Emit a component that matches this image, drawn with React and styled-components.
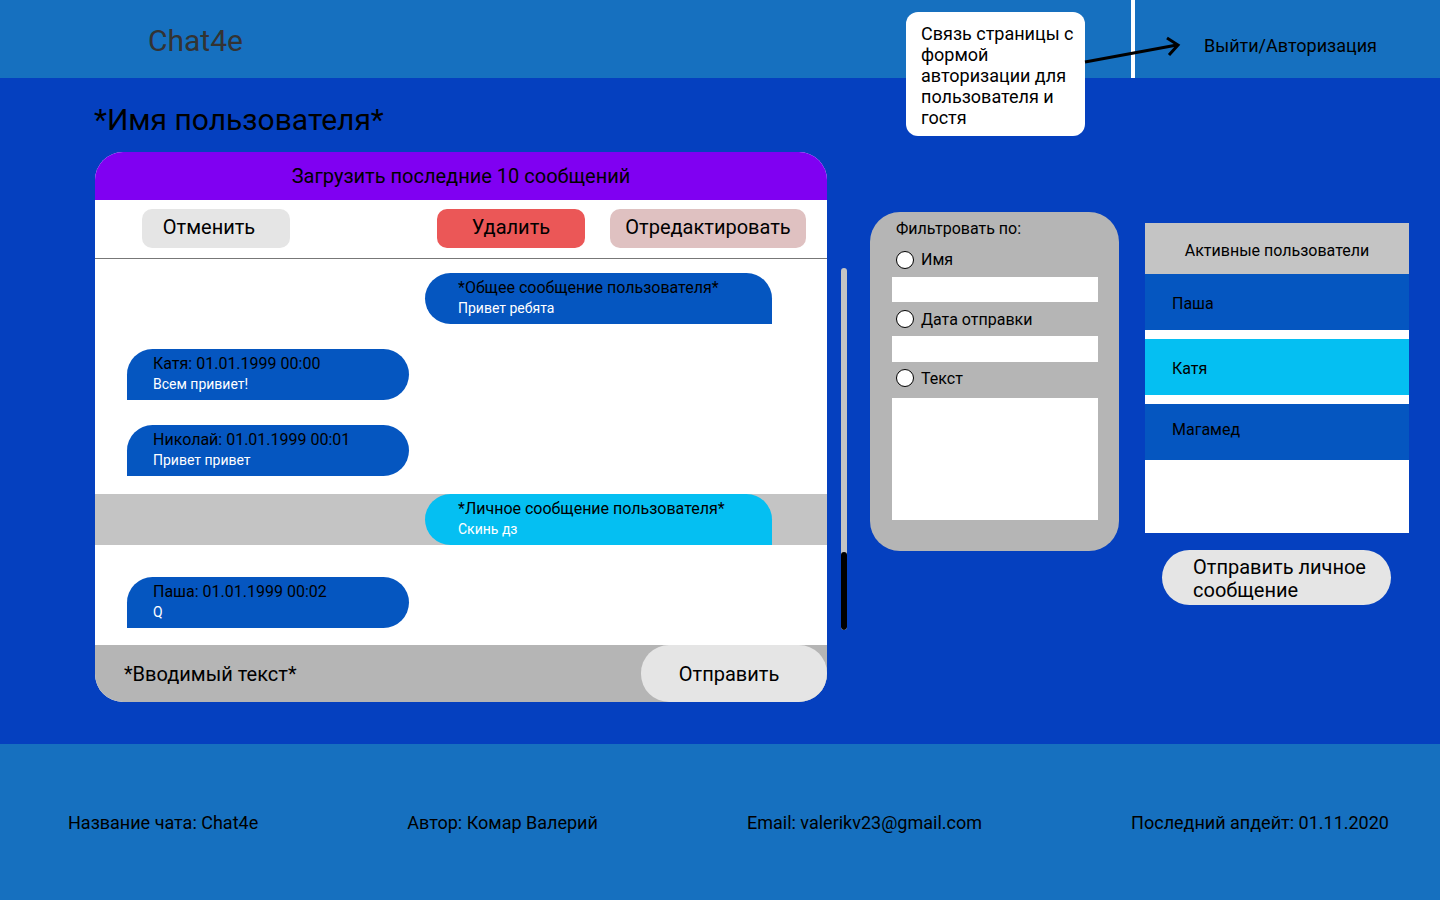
import React from "react";
import styled, { createGlobalStyle } from "styled-components";

const GlobalStyle = createGlobalStyle`
  html, body {
    margin: 0;
    padding: 0;
    width: 1440px;
    height: 900px;
    overflow: hidden;
    font-family: Roboto, "Noto Sans", sans-serif;
    color: #000;
  }
`;

const Page = styled.div`
  display: flex;
  flex-direction: column;
  width: 1440px;
  height: 900px;
  background: #0540bf;
`;

const Header = styled.header`
  position: relative;
  display: flex;
  align-items: center;
  height: 78px;
  background: #1670bf;
  z-index: 2;
`;

const Logo = styled.div`
  margin: 2px 0 0 148px;
  font-size: 30px;
  color: #333;
  flex: 1;
`;

const Divider = styled.div`
  align-self: stretch;
  width: 4px;
  background: #fff;
`;

const AuthLink = styled.a`
  width: 236px;
  padding-left: 69px;
  font-size: 18px;
  color: #000;
  margin-top: 12px;
`;

const Callout = styled.div`
  position: absolute;
  left: 906px;
  top: 12px;
  width: 179px;
  height: 124px;
  box-sizing: border-box;
  padding: 11px 6px 0 15px;
  background: #fff;
  border-radius: 12px;
  font-size: 18px;
  line-height: 21px;
`;

const CalloutArrow = styled.svg`
  position: absolute;
  left: 1083px;
  top: 36px;
`;

const Main = styled.main`
  display: flex;
  align-items: flex-start;
  height: 666px;
`;

const ChatColumn = styled.section`
  display: flex;
  flex-direction: column;
  margin-left: 95px;
`;

const UserName = styled.h1`
  margin: 25px 0 15px -1px;
  font-size: 30px;
  line-height: 34px;
  font-weight: 400;
`;

const ChatRow = styled.div`
  display: flex;
  gap: 14px;
`;

const ChatPanel = styled.div`
  display: flex;
  flex-direction: column;
  width: 732px;
  height: 550px;
  background: #fff;
  border-radius: 28px;
  overflow: hidden;
`;

const LoadBar = styled.div`
  display: flex;
  align-items: center;
  justify-content: center;
  height: 48px;
  flex-shrink: 0;
  background: #8000f2;
  font-size: 20px;
`;

const Toolbar = styled.div`
  display: flex;
  align-items: center;
  height: 58px;
  flex-shrink: 0;
  padding: 0 21px 0 47px;
  border-bottom: 1px solid #777;
`;

const ToolButton = styled.button`
  height: 39px;
  width: ${(p) => p.$w}px;
  margin: -1px 0 0 ${(p) => p.$ml || 0}px;
  padding: 0 ${(p) => p.$pr || 0}px 3px 0;
  border: none;
  border-radius: 10px;
  background: ${(p) => p.$bg};
  font-family: inherit;
  font-size: 20px;
  color: #000;
`;

const Messages = styled.div`
  display: flex;
  flex-direction: column;
  flex: 1;
  padding-top: 14px;
`;

const PrivateRow = styled.div`
  display: flex;
  background: #c4c4c4;
  margin: ${(p) => p.$m};
`;

const Bubble = styled.div`
  box-sizing: border-box;
  height: 51px;
  width: ${(p) => (p.$right ? 347 : 282)}px;
  margin: ${(p) => p.$m || 0};
  padding: ${(p) => (p.$right ? "5px 0 0 33px" : "5px 0 0 26px")};
  background: ${(p) => (p.$private ? "#05bff2" : "#0556c0")};
  border-radius: ${(p) => (p.$right ? "26px 26px 0 26px" : "26px 26px 26px 0")};
`;

const BubbleTitle = styled.div`
  font-size: 16px;
  line-height: 20px;
  color: #000;
`;

const BubbleText = styled.div`
  font-size: 14px;
  line-height: 20px;
  color: #fff;
`;

const InputBar = styled.div`
  display: flex;
  align-items: center;
  height: 57px;
  flex-shrink: 0;
  background: #b5b5b5;
`;

const InputText = styled.div`
  flex: 1;
  padding-left: 29px;
  font-size: 20px;
`;

const SendButton = styled.button`
  width: 186px;
  height: 57px;
  padding: 0 10px 0 0;
  border: none;
  border-radius: 28px;
  background: #e5e5e5;
  font-family: inherit;
  font-size: 20px;
  color: #000;
`;

const ScrollTrack = styled.div`
  display: flex;
  flex-direction: column;
  justify-content: flex-end;
  width: 6px;
  height: 362px;
  margin-top: 116px;
  border-radius: 3px;
  background: #c4c4c4;
  overflow: hidden;
`;

const ScrollThumb = styled.div`
  height: 78px;
  border-radius: 3px;
  background: #000;
`;

const FilterPanel = styled.aside`
  display: flex;
  flex-direction: column;
  box-sizing: border-box;
  width: 249px;
  height: 339px;
  margin: 134px 0 0 23px;
  padding: 7px 21px 0 22px;
  background: #b5b5b5;
  border-radius: 30px;
`;

const FilterLabel = styled.div`
  padding-left: 4px;
  font-size: 16px;
  line-height: 20px;
`;

const RadioRow = styled.label`
  display: flex;
  align-items: center;
  gap: 7px;
  box-sizing: border-box;
  height: ${(p) => p.$h}px;
  padding: ${(p) => p.$pad || "0"};
  padding-left: 4px;
  font-size: 16px;
`;

const Radio = styled.span`
  box-sizing: border-box;
  width: 18px;
  height: 18px;
  border-radius: 50%;
  border: 1px solid #000;
  background: #fff;
`;

const FilterInput = styled.div`
  height: ${(p) => p.$h}px;
  background: #fff;
`;

const UsersColumn = styled.aside`
  display: flex;
  flex-direction: column;
  margin: 145px 0 0 26px;
`;

const UsersList = styled.div`
  display: flex;
  flex-direction: column;
  gap: 9px;
  width: 264px;
  height: 310px;
  background: #fff;
`;

const UsersHeader = styled.div`
  display: flex;
  align-items: center;
  justify-content: center;
  height: 51px;
  margin-bottom: -9px;
  padding-top: 3px;
  box-sizing: border-box;
  background: #c4c4c4;
  font-size: 16px;
`;

const UserRow = styled.div`
  display: flex;
  align-items: center;
  box-sizing: border-box;
  height: 56px;
  padding: ${(p) => p.$pad || "2px 0 0 0"};
  padding-left: 27px;
  background: ${(p) => (p.$active ? "#05bff2" : "#0556c0")};
  font-size: 16px;
`;

const PrivateButton = styled.button`
  width: 229px;
  height: 55px;
  margin: 17px 0 0 17px;
  padding: 3px 0 0 31px;
  border: none;
  border-radius: 28px;
  background: #e5e5e5;
  font-family: inherit;
  font-size: 20px;
  line-height: 23px;
  text-align: left;
  color: #000;
`;

const Footer = styled.footer`
  display: flex;
  align-items: center;
  justify-content: space-between;
  height: 156px;
  padding: 0 51px 0 68px;
  background: #1670bf;
  font-size: 18px;
`;

const messages = [
  { right: true, title: "*Общее сообщение пользователя*", text: "Привет ребята", m: "0 0 0 330px" },
  { title: "Катя: 01.01.1999 00:00", text: "Всем привиет!", m: "25px 0 0 32px" },
  { title: "Николай: 01.01.1999 00:01", text: "Привет привет", m: "25px 0 0 32px" },
];

export default function App() {
  return (
    <Page>
      <GlobalStyle />
      <Header>
        <Logo>Chat4e</Logo>
        <Divider />
        <AuthLink>Выйти/Авторизация</AuthLink>
        <Callout>Связь страницы с формой авторизации для пользователя и гостя</Callout>
        <CalloutArrow width="100" height="32" viewBox="0 0 100 32">
          <path d="M2 26 L94 9" stroke="#000" strokeWidth="3" fill="none" />
          <path d="M84 2 L95 9 L86 19" stroke="#000" strokeWidth="3" fill="none" strokeLinejoin="miter" />
        </CalloutArrow>
      </Header>

      <Main>
        <ChatColumn>
          <UserName>*Имя пользователя*</UserName>
          <ChatRow>
            <ChatPanel>
              <LoadBar>Загрузить последние 10 сообщений</LoadBar>
              <Toolbar>
                <ToolButton $w={148} $pr={14} $bg="#e5e5e5">Отменить</ToolButton>
                <ToolButton $w={148} $ml={147} $bg="#eb5757">Удалить</ToolButton>
                <ToolButton $w={196} $ml={25} $bg="#dfc1c1">Отредактировать</ToolButton>
              </Toolbar>
              <Messages>
                {messages.map((m) => (
                  <Bubble key={m.title} $right={m.right} $m={m.m}>
                    <BubbleTitle>{m.title}</BubbleTitle>
                    <BubbleText>{m.text}</BubbleText>
                  </Bubble>
                ))}
                <PrivateRow $m="18px 0 0 0">
                  <Bubble $right $private $m="0 0 0 330px">
                    <BubbleTitle>*Личное сообщение пользователя*</BubbleTitle>
                    <BubbleText>Скинь дз</BubbleText>
                  </Bubble>
                </PrivateRow>
                <Bubble $m="32px 0 0 32px">
                  <BubbleTitle>Паша: 01.01.1999 00:02</BubbleTitle>
                  <BubbleText>Q</BubbleText>
                </Bubble>
              </Messages>
              <InputBar>
                <InputText>*Вводимый текст*</InputText>
                <SendButton>Отправить</SendButton>
              </InputBar>
            </ChatPanel>
            <ScrollTrack>
              <ScrollThumb />
            </ScrollTrack>
          </ChatRow>
        </ChatColumn>

        <FilterPanel>
          <FilterLabel>Фильтровать по:</FilterLabel>
          <RadioRow $h={38} $pad="3px 0 0 0">
            <Radio />
            Имя
          </RadioRow>
          <FilterInput $h={25} />
          <RadioRow $h={34}>
            <Radio />
            Дата отправки
          </RadioRow>
          <FilterInput $h={26} />
          <RadioRow $h={36} $pad="0 0 4px 0">
            <Radio />
            Текст
          </RadioRow>
          <FilterInput $h={122} />
        </FilterPanel>

        <UsersColumn>
          <UsersList>
            <UsersHeader>Активные пользователи</UsersHeader>
            <UserRow>Паша</UserRow>
            <UserRow $active>Катя</UserRow>
            <UserRow $pad="0 0 6px 0">Магамед</UserRow>
          </UsersList>
          <PrivateButton>Отправить личное сообщение</PrivateButton>
        </UsersColumn>
      </Main>

      <Footer>
        <span>Название чата: Chat4e</span>
        <span>Автор: Комар Валерий</span>
        <span>Email: valerikv23@gmail.com</span>
        <span>Последний апдейт: 01.11.2020</span>
      </Footer>
    </Page>
  );
}
